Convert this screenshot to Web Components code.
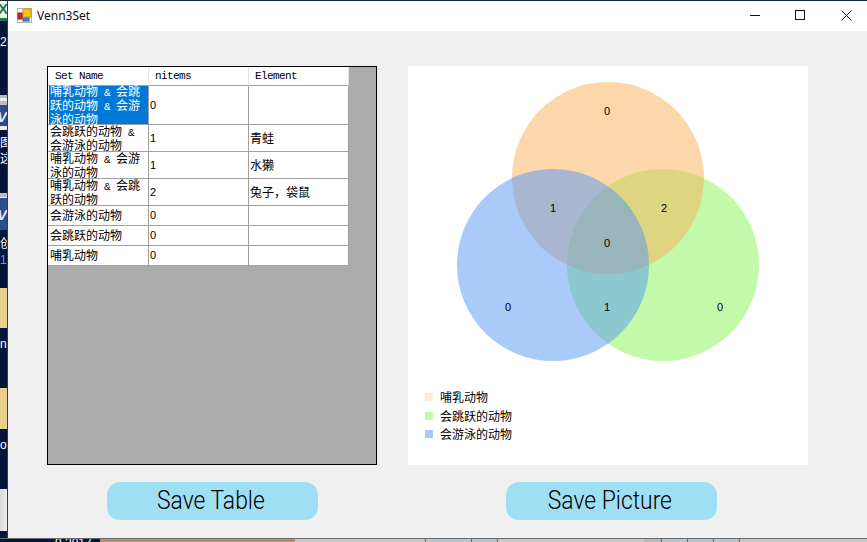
<!DOCTYPE html>
<html><head><meta charset="utf-8">
<style>html,body{margin:0;padding:0;background:#04173a}body{width:867px;height:542px;overflow:hidden}</style>
</head><body>
<app-desktop>
  <app-window title="Venn3Set">
    <data-table></data-table>
    <venn-chart></venn-chart>
    <save-button>Save Table</save-button>
    <save-button class="b2">Save Picture</save-button>
  </app-window>
</app-desktop>
<script>
const CJK='"Noto Sans CJK SC","Noto Sans CJK JP",sans-serif';
const latin=s=>s.split('|').map(p=>p.replace(/[A-Za-z0-9& ]+/g,m=>`<span class="l">${m.replace('&','&amp;').replace(/ /g,'&nbsp;')}</span>`)).join('<br>');
const LSTYLE=`.l{font:11px/12px "Liberation Mono",monospace;letter-spacing:-.6px}.num{font:11px/12px "Liberation Sans",sans-serif}`;
function def(n,html,setup){customElements.define(n,class extends HTMLElement{constructor(){super();this.attachShadow({mode:'open'}).innerHTML=typeof html==='function'?html(this):html;}connectedCallback(){setup&&setup(this)}})}

def('app-desktop',`<style>
:host{display:grid;grid-template-columns:8px 859px;grid-template-rows:1px 537px 4px;width:867px;height:542px;background:#04173a;overflow:hidden}
.top{grid-column:1/3;background:#1c2a36}
.side{display:flex;flex-direction:column;width:7px;border-right:1px solid #333c48;font:12px/14px "Liberation Sans",${CJK};color:#fff;overflow:hidden;white-space:nowrap}
.side>div{flex:none;overflow:hidden}
.bot{grid-column:1/3;display:flex;border-top:1px solid #6a6a6a;height:3px}
.bot>i{display:block;height:3px;flex:none;box-sizing:border-box;overflow:hidden;font:normal 12px/9px "Liberation Sans",sans-serif;color:#fff;white-space:nowrap}
.w{background:#e9efe9}.g{background:#b9bcc0}.u{background:#2b4f8e;color:#dfe8f5;font:italic bold 15px/15px "Liberation Sans";}
.t{background:#e8d08a}.n{background:#04173a}.s{background:linear-gradient(90deg,#d8d8d8,#efefef)}
</style>
<div class="top"></div>
<div class="side">
 <div class="w" style="height:20px;background:linear-gradient(#eef3ee 0 17px,#1f7a45 17px);color:#1f7a45;font:bold 15px/15px 'Liberation Sans'"><span style="margin-left:-2px">X</span></div>
 <div class="n" style="height:14px"></div>
 <div class="n" style="height:14px;padding-top:0">2</div>
 <div class="n" style="height:46px"></div>
 <div class="g" style="height:3px"></div><div class="w" style="height:3px"></div><div class="g" style="height:4px"></div>
 <div class="u" style="height:21px;line-height:24px"><span style="margin-left:-3px">V</span></div>
 <div class="w" style="height:4px"></div>
 <div class="n" style="height:5px"></div>
 <div class="n" style="height:16px;line-height:16px">图</div>
 <div class="n" style="height:16px;line-height:16px">这</div>
 <div class="n" style="height:26px"></div>
 <div class="g" style="height:4px"></div><div class="w" style="height:1px"></div>
 <div class="u" style="height:32px;line-height:34px"><span style="margin-left:-3px">V</span></div>
 <div class="n" style="height:6px"></div>
 <div class="n" style="height:16px;line-height:16px">创</div>
 <div class="n" style="height:16px;line-height:16px;color:#5aa0e0">1</div>
 <div class="n" style="height:20px"></div>
 <div class="t" style="height:40px"></div>
 <div class="n" style="height:9px"></div>
 <div class="n" style="height:14px">n</div>
 <div class="n" style="height:37px"></div>
 <div class="t" style="height:41px"></div>
 <div class="n" style="height:9px"></div>
 <div class="n" style="height:14px">ot</div>
 <div class="n" style="height:37px"></div>
 <div class="s" style="height:42px"></div>
 <div class="n" style="flex:1"></div>
</div>
<slot></slot>
<div class="bot">
 <i style="width:100px;background:#04173a;padding-left:55px">9 2017</i>
 <i style="width:195px;background:#b78d74"></i>
 <i style="width:130px;background:#c9c9c9"></i>
 <i style="width:46px;background:#bcc5cb;border-left:1px solid #666"></i>
 <i style="width:26px;background:#bcc5cb;border-left:1px solid #1273d0"></i>
 <i style="width:147px;background:#c9c9c9;border-left:1px solid #666"></i>
 <i style="width:17px;background:#bbb"></i>
 <i style="width:26px;background:#bcc5cb;border-left:1px solid #666"></i>
 <i style="width:26px;background:#bcc5cb;border-left:1px solid #1273d0"></i>
 <i style="width:26px;background:#bcc5cb;border-left:1px solid #1273d0"></i>
 <i style="flex:1;background:#c9c9c9;border-left:1px solid #666"></i>
</div>`);

def('app-window',el=>`<style>
:host{display:flex;flex-direction:column;background:#f0f0f0;min-width:0}
.bar{display:flex;align-items:center;height:30px;background:#fff;flex:none}
svg.ic{margin:0 0 2px 9px;flex:none}
.tt{margin-left:5px;font:12px/16px "Noto Sans","Open Sans",sans-serif;color:#111;flex:1}
.c{height:30px;display:flex;align-items:center;justify-content:center;flex:none}
.c svg{margin-bottom:2px}
.body{display:grid;grid-template-columns:330px 400px;grid-template-rows:399px 38px;column-gap:31px;row-gap:17px;padding:35px 0 0 39px}
</style>
<div class="bar">
<svg class="ic" width="15" height="15" viewBox="0 0 15 15"><rect x=".5" y=".5" width="14" height="14" fill="#f4f4f4" stroke="#b5b5b5"/><rect x="6" y="1" width="8" height="8" fill="#f5c518" stroke="#c79a10"/><rect x="1" y="5" width="4" height="6" fill="#d92a1c" stroke="#a31810"/><rect x="6" y="10" width="6" height="3" fill="#4a86e0" stroke="#2e5fb0"/></svg>
<span class="tt">${el.getAttribute('title')}</span>
<span class="c" style="width:40px"><svg width="10" height="10"><path d="M0 5.5h10" stroke="#111" fill="none"/></svg></span>
<span class="c" style="width:50px"><svg width="10" height="10"><rect x=".5" y=".5" width="9" height="9" fill="none" stroke="#111"/></svg></span>
<span class="c" style="width:42px"><svg width="11" height="11"><path d="M.5.5l10 10M10.5.5l-10 10" stroke="#111" fill="none"/></svg></span>
</div>
<div class="body"><slot></slot></div>`);

const ROWS=[
 [39,'哺乳动物 & 会跳|跃的动物 & 会游|泳的动物','0',''],
 [27,'会跳跃的动物 &|会游泳的动物','1','青蛙'],
 [27,'哺乳动物 & 会游|泳的动物','1','水獭'],
 [27,'哺乳动物 & 会跳|跃的动物','2','兔子，袋鼠'],
 [20,'会游泳的动物','0',''],
 [20,'会跳跃的动物','0',''],
 [20,'哺乳动物','0','']];
def('data-table',`<style>
:host{display:block;box-sizing:border-box;width:330px;height:399px;border:1px solid #000;background:#ababab;font:12px/12px ${CJK};color:#000}
${LSTYLE}
.g{display:grid;grid-template-columns:101px 100px 100px;width:301px}
.h{background:#fff;border-right:1px solid #e4e4e4;border-bottom:1px solid #a0a0a0;padding-left:6px;display:flex;align-items:center;height:19px;box-sizing:border-box;white-space:nowrap}
.h:first-child{padding-left:7px}
.d{background:#fff;border-right:1px solid #a0a0a0;border-bottom:1px solid #a0a0a0;padding-left:1px;display:flex;align-items:center;white-space:nowrap;box-sizing:border-box}
.d.a{padding-left:2px}
.d.sh{padding-bottom:2px}
</style><div class="g">
<div class="h"><span class="l">Set Name</span></div><div class="h"><span class="l">nitems</span></div><div class="h"><span class="l">Element</span></div>
${ROWS.map(r=>{const s=r[0]==20?' sh':'';return `<div class="d a${s}" style="height:${r[0]}px"><span>${latin(r[1])}</span></div><div class="d${s}" style="height:${r[0]}px"><span class="num">${r[2]}</span></div><div class="d${s}" style="height:${r[0]}px"><span>${r[3]}</span></div>`}).join('')}
</div>`,el=>{const c=el.shadowRoot.querySelector('.d');c.style.background='#0078d7';c.style.color='#fff';c.style.boxShadow='inset 1px 0 0 #fff';});

def('legend-row',el=>`<style>
:host{display:flex;align-items:center;height:18.5px;font:12px/12px ${CJK};color:#000}
i{display:block;width:8px;height:8px;margin-right:7px;background:${el.getAttribute('color')}}
</style><i></i><slot></slot>`);

const NUMS=[[199,45,0],[145,142,1],[256,142,2],[199,177,0],[100,241,0],[199,241,1],[312,241,0]];
def('venn-chart',`<style>
:host{display:flex;flex-direction:column;width:400px;height:399px;background:#fff}
svg{display:block;margin:16px 0 0 49px;flex:none}
.lg{margin:16px 0 0 17px}
text{font:11px "Liberation Sans",sans-serif;fill:#000}
</style>
<svg width="351" height="290" viewBox="49 16 351 290">
<circle cx="255" cy="199" r="96" fill="#87f555" fill-opacity=".5"/>
<circle cx="200" cy="112" r="96" fill="#f8af55" fill-opacity=".5"/>
<circle cx="145" cy="199" r="96" fill="#5595f5" fill-opacity=".5"/>
${NUMS.map(n=>`<text x="${n[0]}" y="${n[1]+4}" text-anchor="middle">${n[2]}</text>`).join('')}
</svg>
<div class="lg">
<legend-row color="#fce9d6">哺乳动物</legend-row>
<legend-row color="#c3faaa">会跳跃的动物</legend-row>
<legend-row color="#aacafa">会游泳的动物</legend-row>
</div>`);

def('save-button',`<style>
:host{display:flex;align-items:center;justify-content:center;width:211px;height:38px;margin-left:60px;background:#9fdff3;border-radius:13px;font:300 25px/36px Roboto,sans-serif;color:#000;padding:0 3px 1px 0;box-sizing:border-box;white-space:nowrap}
:host(.b2){margin-left:98px}
span{display:inline-block;transform:scaleX(.915)}
</style><span><slot></slot></span>`);
</script>
</body></html>
